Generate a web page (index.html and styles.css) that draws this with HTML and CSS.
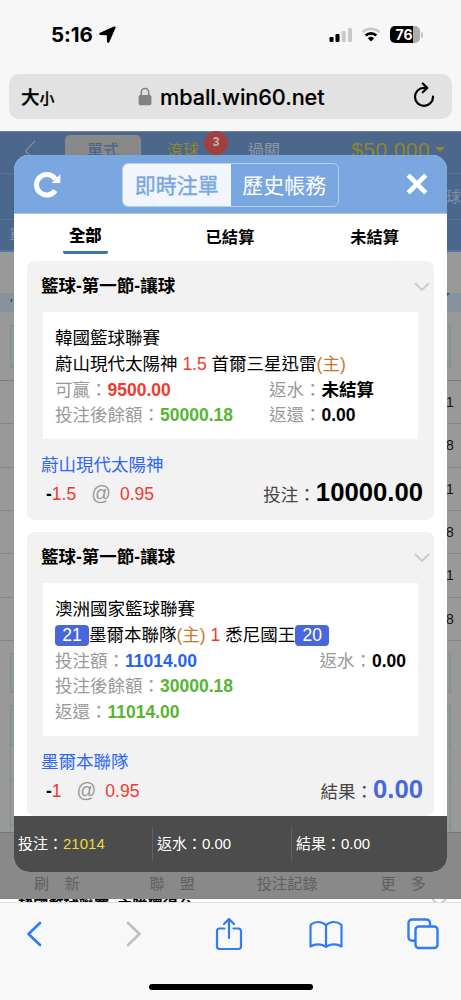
FILE: index.html
```html
<!DOCTYPE html>
<html lang="zh-Hant">
<head>
<meta charset="utf-8">
<title>即時注單</title>
<link rel="stylesheet" href="styles.css">
</head>
<body>
<div class="phone">
  <header class="status">
    <span class="clock">5:16</span>
    <svg class="location" width="17" height="17" viewBox="0 0 17 17"><path d="M15 .6 1 6.800C-.2 7.400 0 8.800 1.300 9l6.500.2.200 6.500c.1 1.300 1.700 1.600 2.300.3L16.500 2C16.900.9 16.100.1 15 .6z"/></svg>
    <svg class="signal" width="24" height="16" viewBox="0 0 24 16"><rect x=".5" y="10" width="4" height="5" rx="1.200"/><rect x="6.500" y="7" width="4" height="8" rx="1.200"/><g fill="#c9c9c9"><rect x="12.700" y="4" width="4" height="11" rx="1.200"/><rect x="19" y="1" width="4" height="14" rx="1.200"/></g></svg>
    <svg class="wifi" width="20" height="15" viewBox="0 0 20 15"><path d="M1.600 5.200a12.200 12.200 0 0 1 16.800 0" fill="none" stroke="#c9c9c9" stroke-width="2.500"/><path d="M4.700 8.500a7.600 7.600 0 0 1 10.600 0" fill="none" stroke="#000" stroke-width="2.600"/><path d="M6.900 11.200a4.500 4.500 0 0 1 6.200 0L10 14.400z"/></svg>
    <div class="battery"><span>76</span></div><i class="battery-tip"></i>
  </header>
  <div class="address">
    <span class="reader">大<small>小</small></span>
    <svg class="lock" width="14" height="19" viewBox="0 0 14 19"><path d="M3.300 9V5.200a3.700 3.700 0 0 1 7.400 0V9" fill="none" stroke="#808085" stroke-width="1.600"/><rect x=".6" y="8" width="12.800" height="10.300" rx="1.800" fill="#808085"/></svg>
    <span class="host">mball.win60.net</span>
    <svg class="reload" width="22" height="26" viewBox="0 0 22 26"><path d="M14 5.900H11A9 9 0 1 0 20 14.600M9.800 1.500l4.400 4.400-4.400 4.400" fill="none" stroke="#000" stroke-width="2.200" stroke-linecap="round" stroke-linejoin="round"/></svg>
  </div>

  <main class="viewport">
    <div class="page">
      <div class="page-head">
        <div class="page-nav">
          <svg class="back" width="12" height="22" viewBox="0 0 12 22"><path d="M11 1 1.500 11 11 21" fill="none" stroke="#7d8da4" stroke-width="1.300"/></svg>
          <span class="nav-on">單式</span>
          <span class="nav-live">滾球</span>
          <span class="nav-count">3</span>
          <span class="nav-parlay">過關</span>
          <span class="balance">$50,000</span>
          <i class="caret"></i>
        </div>
        <div class="page-sub sub-right">球</div>
        <div class="page-sub sub-left">單</div>
      </div>
      <div class="page-gap"></div>
      <div class="page-band"><span>'</span><span>◤</span></div>
      <div class="page-box"><i></i></div>
      <div class="page-rows">
        <div>1</div><div>8</div><div>1</div><div>8</div><div>1</div><div>8</div>
      </div>
      <div class="page-box second"><i></i></div>
      <div class="page-table"><i></i><i></i><i></i><i></i></div>
      <nav class="page-foot"><span>刷　新</span><span>聯　盟</span><span>投注記錄</span><span>更　多</span></nav>
      <div class="peek"><span>韓國籃球聯賽</span><span>主隊獨得台</span><svg width="16" height="10" viewBox="0 0 16 10"><path d="M1 0l7 6 7-6" fill="none" stroke="#bbb" stroke-width="1.500"/></svg></div>
    </div>

    <section class="modal">
      <div class="modal-head">
        <svg class="refresh" width="27" height="27" viewBox="0 0 27 27"><path d="M21.300 19.500A10.300 10.300 0 1 1 21.300 8" fill="none" stroke="#fff" stroke-width="5"/><path d="M26.300 3.300V12h-8.600z" fill="#fff"/></svg>
        <div class="segment"><span class="active">即時注單</span><span>歷史帳務</span></div>
        <svg class="close" width="22" height="22" viewBox="0 0 22 22"><path d="M2.200 2.200l17.600 17.600m0-17.600L2.200 19.800" stroke="#fff" stroke-width="4.600"/></svg>
      </div>
      <div class="tabs"><span class="current"><b>全部</b></span><span>已結算</span><span>未結算</span></div>
      <div class="list">
        <article class="card">
          <h2>籃球-第一節-讓球<svg width="16" height="10" viewBox="0 0 16 10"><path d="M1 1l7 7 7-7" fill="none" stroke="#c9c9c9" stroke-width="1.800"/></svg></h2>
          <div class="detail">
            <p>韓國籃球聯賽</p>
            <p>蔚山現代太陽神 <em class="red">1.5</em> 首爾三星迅雷<em class="home">(主)</em></p>
            <p class="pair"><span class="wide"><i>可贏：</i><b class="red">9500.00</b></span><span><i>返水：</i><b>未結算</b></span></p>
            <p class="pair"><span class="wide"><i>投注後餘額：</i><b class="green">50000.18</b></span><span><i>返還：</i><b>0.00</b></span></p>
          </div>
          <p class="pick">蔚山現代太陽神</p>
          <div class="odds"><b>-</b><em class="red">1.5</em><span class="at">@</span><em class="red">0.95</em><span class="label">投注：</span><strong>10000.00</strong></div>
        </article>
        <article class="card settled">
          <h2>籃球-第一節-讓球<svg width="16" height="10" viewBox="0 0 16 10"><path d="M1 1l7 7 7-7" fill="none" stroke="#c9c9c9" stroke-width="1.800"/></svg></h2>
          <div class="detail">
            <p>澳洲國家籃球聯賽</p>
            <p><span class="score">21</span>墨爾本聯隊<em class="home">(主)</em> <em class="red">1</em> 悉尼國王<span class="score">20</span></p>
            <p class="pair split"><span><i>投注額：</i><b class="blue">11014.00</b></span><span><i>返水：</i><b>0.00</b></span></p>
            <p><i>投注後餘額：</i><b class="green">30000.18</b></p>
            <p><i>返還：</i><b class="green">11014.00</b></p>
          </div>
          <p class="pick">墨爾本聯隊</p>
          <div class="odds"><b>-</b><em class="red">1</em><span class="at">@</span><em class="red">0.95</em><span class="label">結果：</span><strong class="result">0.00</strong></div>
        </article>
      </div>
      <footer class="totals"><span>投注：<em>21014</em></span><span>返水：0.00</span><span>結果：0.00</span></footer>
    </section>
  </main>

  <footer class="toolbar">
    <div class="tools">
      <svg width="16" height="26" viewBox="0 0 16 26"><path d="M14 2 2.500 13 14 24" fill="none" stroke="#2f7cf6" stroke-width="2.700" stroke-linecap="round" stroke-linejoin="round"/></svg>
      <svg width="16" height="26" viewBox="0 0 16 26"><path d="M2 2l11.500 11L2 24" fill="none" stroke="#bfbfbf" stroke-width="2.700" stroke-linecap="round" stroke-linejoin="round"/></svg>
      <svg class="share" width="28" height="34" viewBox="0 0 28 34"><path d="M9.500 11.500H4.500a2.500 2.500 0 0 0-2.500 2.500v15.500A2.500 2.500 0 0 0 4.500 32h19a2.500 2.500 0 0 0 2.500-2.500V14a2.500 2.500 0 0 0-2.500-2.500h-5M14 21V2M9 7l5-5 5 5" fill="none" stroke="#2f7cf6" stroke-width="2.200" stroke-linecap="round" stroke-linejoin="round"/></svg>
      <svg width="34" height="29" viewBox="0 0 34 29"><path d="M17 5.200C14.500 2.600 12 2 9.300 2 6.500 2 4 2.700 2.300 4.300a1.500 1.500 0 0 0-.8 1.300V26.500C3.700 25 6 24.300 9 24.300s5.800.8 8 2.700c2.200-1.900 5-2.700 8-2.700s5.300.700 7.500 2.200V5.600a1.500 1.500 0 0 0-.8-1.300C30 2.700 27.500 2 24.700 2 22 2 19.500 2.600 17 5.200zM17 5.200V26" fill="none" stroke="#2f7cf6" stroke-width="2.200" stroke-linejoin="round"/></svg>
      <svg width="32" height="32" viewBox="0 0 32 32"><g fill="none" stroke="#2f7cf6" stroke-width="2.400"><path d="M8 22.800H5a3.500 3.500 0 0 1-3.500-3.500V5A3.500 3.500 0 0 1 5 1.500h14.500A3.500 3.500 0 0 1 23 5v3"/><rect x="8.500" y="8.500" width="22" height="21.500" rx="3.300"/></g></svg>
    </div>
    <i class="home-bar"></i>
  </footer>
</div>
</body>
</html>
```
FILE: styles.css
```css
* { box-sizing: border-box; }
body { margin: 0; font-family: "Liberation Sans", "Noto Sans CJK TC", sans-serif; }
p, h2 { margin: 0; }
i, em { font-style: normal; }
svg { display: block; flex: none; }

.phone { width: 461px; height: 1000px; background: #f7f7f7; display: flex; flex-direction: column; overflow: hidden; }

.status { height: 74px; display: flex; align-items: center; padding: 0 38px 5px 51px; flex: none; }
.clock { font: 700 20.500px/24px Inter, sans-serif; width: 48px; letter-spacing: -.1px; }
.signal { margin-left: auto; }
.wifi { margin: 0 9px 0 8px; }
.battery { width: 30px; height: 17px; border-radius: 5px; background: linear-gradient(90deg, #000 76%, #acacac 76%); color: #fff; font: 700 14px/17px Inter, sans-serif; text-align: center; padding-right: 2px; }
.battery-tip { width: 2px; height: 6px; margin-left: 1px; border-radius: 0 2px 2px 0; background: #c4c4c4; }

.address { height: 45px; margin: 0 9px 12px; border-radius: 10px; background: #e2e2e2; display: flex; align-items: center; padding: 0 17px 0 12px; flex: none; }
.reader { width: 117px; font: 500 18.500px/24px "Noto Sans CJK TC", sans-serif; -webkit-text-stroke: .3px #000; }
.reader small { font-size: 15px; }
.host { font: 500 21.700px/28px Inter, sans-serif; margin-left: 8px; letter-spacing: -.1px; -webkit-text-stroke: .15px #000; }
.reload { margin-left: auto; margin-top: -4px; }

.viewport { height: 771px; flex: none; position: relative; overflow: hidden; }
.page { height: 771px; background: #999; display: flex; flex-direction: column; }
.page-head { height: 121px; background: #4c678c; border-top: 1px solid #71849b; border-bottom: 2px solid #5576a5; flex: none; }
.page-nav { height: 42px; display: flex; align-items: flex-start; padding: 3px 16px 0 24px; border-bottom: 1px solid #5b7394; font-size: 16px; }
.page-nav > * { flex: none; }
.back { margin-top: 5px; }
.nav-on { margin-left: 29px; width: 76px; height: 34px; border-radius: 5px; background: #898989; color: #4c678c; text-align: center; line-height: 32px; font-weight: 500; }
.nav-live { margin-left: 26px; line-height: 32px; color: #93862d; }
.nav-count { width: 24px; height: 24px; margin: -4px 0 0 5px; border-radius: 50%; background: #a0403f; color: #bbb; font: 700 12px/23px "Liberation Sans", sans-serif; text-align: center; }
.nav-parlay { margin-left: 20px; color: #8d98aa; line-height: 32px; }
.balance { margin-left: auto; color: #92862d; font: 21px/29px "Liberation Sans", sans-serif; letter-spacing: .4px; }
.caret { margin: 12px 0 0 5px; border: 5px solid transparent; border-top-color: #92862d; border-bottom: 0; }
.page-sub { height: 46px; line-height: 46px; color: #8290a5; font-size: 16px; border-bottom: 1px solid #5b7394; overflow: hidden; }
.sub-right { padding-left: 446px; font-size: 15px; }
.sub-left { height: 30px; line-height: 32px; padding-left: 9px; border: 0; }
.page-gap { height: 42px; flex: none; border-bottom: 1px solid #8f8f8f; }
.page-band { height: 18px; flex: none; background: #87929f; padding: 0 10px 0 10px; display: flex; justify-content: space-between; color: #24374c; font-size: 14px; line-height: 20px; }
.page-band span:last-child { color: #234f82; font-size: 7px; line-height: 6px; padding-right: 1px; }
.page-box { height: 69px; padding: 13px 10px 12px; flex: none; border-bottom: 1px solid #7d7d7d; }
.page-box i { display: block; height: 43px; border: 1px solid #76958a; background: #8e9995; }
.page-box.second { height: 64px; padding: 12px 10px; border: 0; }
.page-box.second i { height: 40px; }
.page-rows { height: 260px; flex: none; }
.page-rows div { height: 43.330px; line-height: 43px; padding-left: 446px; font-size: 14px; color: #111; border-bottom: 1px solid #858585; }
.page-table { flex: 1; margin: 0 10px; border: 1px solid #76958a; border-bottom: 0; display: flex; flex-direction: column; overflow: hidden; }
.page-table i { height: 36px; flex: none; border-bottom: 1px solid #829189; }
.page-table i:first-child { height: 39px; background: #8e9995; }
.page-table i:nth-child(3) { height: 44px; }
.page-foot { height: 67px; flex: none; background: #898989; border-top: 1px solid #777; color: #5f5f5f; font-size: 15.200px; display: flex; justify-content: space-between; align-items: flex-end; padding: 0 35px 3px 34px; line-height: 24px; }
.page-foot span:nth-child(2) { margin-left: 8px; }
.page-foot span:nth-child(3) { margin-right: 1px; }
.peek { height: 3px; flex: none; overflow: hidden; background: #fff; display: flex; padding: 0 14px 0 18px; font-weight: 700; font-size: 15.200px; line-height: 14px; gap: 8px; }
.peek svg { margin-left: auto; }

.modal { position: absolute; left: 14px; top: 24px; width: 433px; height: 717px; border-radius: 15px; overflow: hidden; background: #fff; display: flex; flex-direction: column; }
.modal-head { height: 59px; flex: none; background: #7aa7e0; border-bottom: 1px solid #a9c6e9; display: flex; align-items: center; padding: 0 20px; }
.segment { display: flex; width: 217px; height: 44px; margin-left: 61px; margin-top: 2px; border: 1px solid #b5ceee; border-radius: 6px; color: #fff; font-size: 21px; line-height: 44px; overflow: hidden; }
.segment span { flex: 1; text-align: center; }
.segment .active { background: #f1f5fc; color: #7aa7e0; -webkit-text-stroke: .4px #7aa7e0; }
.close { margin-left: auto; margin-right: -1px; }
.tabs { height: 47px; flex: none; display: flex; font-size: 16.300px; font-weight: 700; line-height: 47px; margin-left: -1px; }
.tabs span { flex: 1; text-align: center; }
.tabs .current { display: flex; justify-content: center; align-items: flex-start; }
.tabs b { height: 40px; line-height: 43px; padding: 0 6px; border-bottom: 3px solid #3d76a8; border-radius: 2px; }
.list { flex: 1; padding: 0 13px; overflow: hidden; }
.card { height: 259px; margin-bottom: 12px; padding: 0 16px; border-radius: 7px; background: #f2f2f2; font-size: 17.500px; }
.card.settled { height: 284px; margin: 0; }
.card h2 { height: 51px; line-height: 49px; font-size: 17.500px; display: flex; align-items: center; justify-content: space-between; padding: 0; margin: 0 -12px 0 -2px; }
.detail { height: 127px; padding: 14px 12px 0; background: #fff; }
.settled .detail { height: 153px; }
.detail p { height: 25.800px; line-height: 25.800px; white-space: nowrap; }
.detail i { color: #999; }
.pair { display: flex; }
.pair .wide { width: 214px; }
.pair.split { justify-content: space-between; }
.red { color: #f03a2e; }
.green { color: #56b531; }
.blue { color: #2862f0; }
.home { color: #c27a2c; }
.score { display: inline-block; width: 34px; height: 21px; line-height: 21px; border-radius: 4px; background: #4967dc; color: #fff; text-align: center; }
.pick { margin: 12px -2px 0; height: 28px; line-height: 28px; color: #2f66f5; }
.odds { height: 31px; line-height: 31px; display: flex; align-items: baseline; margin: -1px -5px 0 0; padding-left: 3px; }
.odds > * { flex: none; }
.odds b, .odds em, .at { margin-bottom: 1px; line-height: 29px; position: relative; top: -1px; }
.odds .at { color: #999; font-size: 19.500px; margin: 0 9px 0 15px; }
.label { margin-left: auto; color: #444; }
.odds strong { font-size: 25.700px; }
.odds strong, .label { line-height: 29px; }
.odds .result { color: #4967dc; }
.totals { height: 56px; flex: none; background: #4c4c4c; color: #fff; font-size: 15px; display: flex; align-items: center; }
.totals span { width: 139px; height: 33px; line-height: 32px; padding-left: 4px; border-right: 1px solid #626262; }
.totals span:last-child { border: 0; }
.totals em { color: #ecd93c; }

.toolbar { flex: 1; border-top: 1px solid #ddd; background: #f8f8f8; display: flex; flex-direction: column; align-items: center; }
.tools { width: 100%; height: 62px; display: flex; align-items: center; padding: 0 0 0 26px; }
.tools svg:nth-child(2) { margin-left: 84px; }
.tools svg:nth-child(3) { margin-left: 73px; margin-top: -1px; }
.tools svg:nth-child(4) { margin-left: 66px; }
.tools svg:nth-child(5) { margin-left: 64px; }
.home-bar { width: 164px; height: 6px; margin-top: 19px; border-radius: 3px; background: #000; }
```
